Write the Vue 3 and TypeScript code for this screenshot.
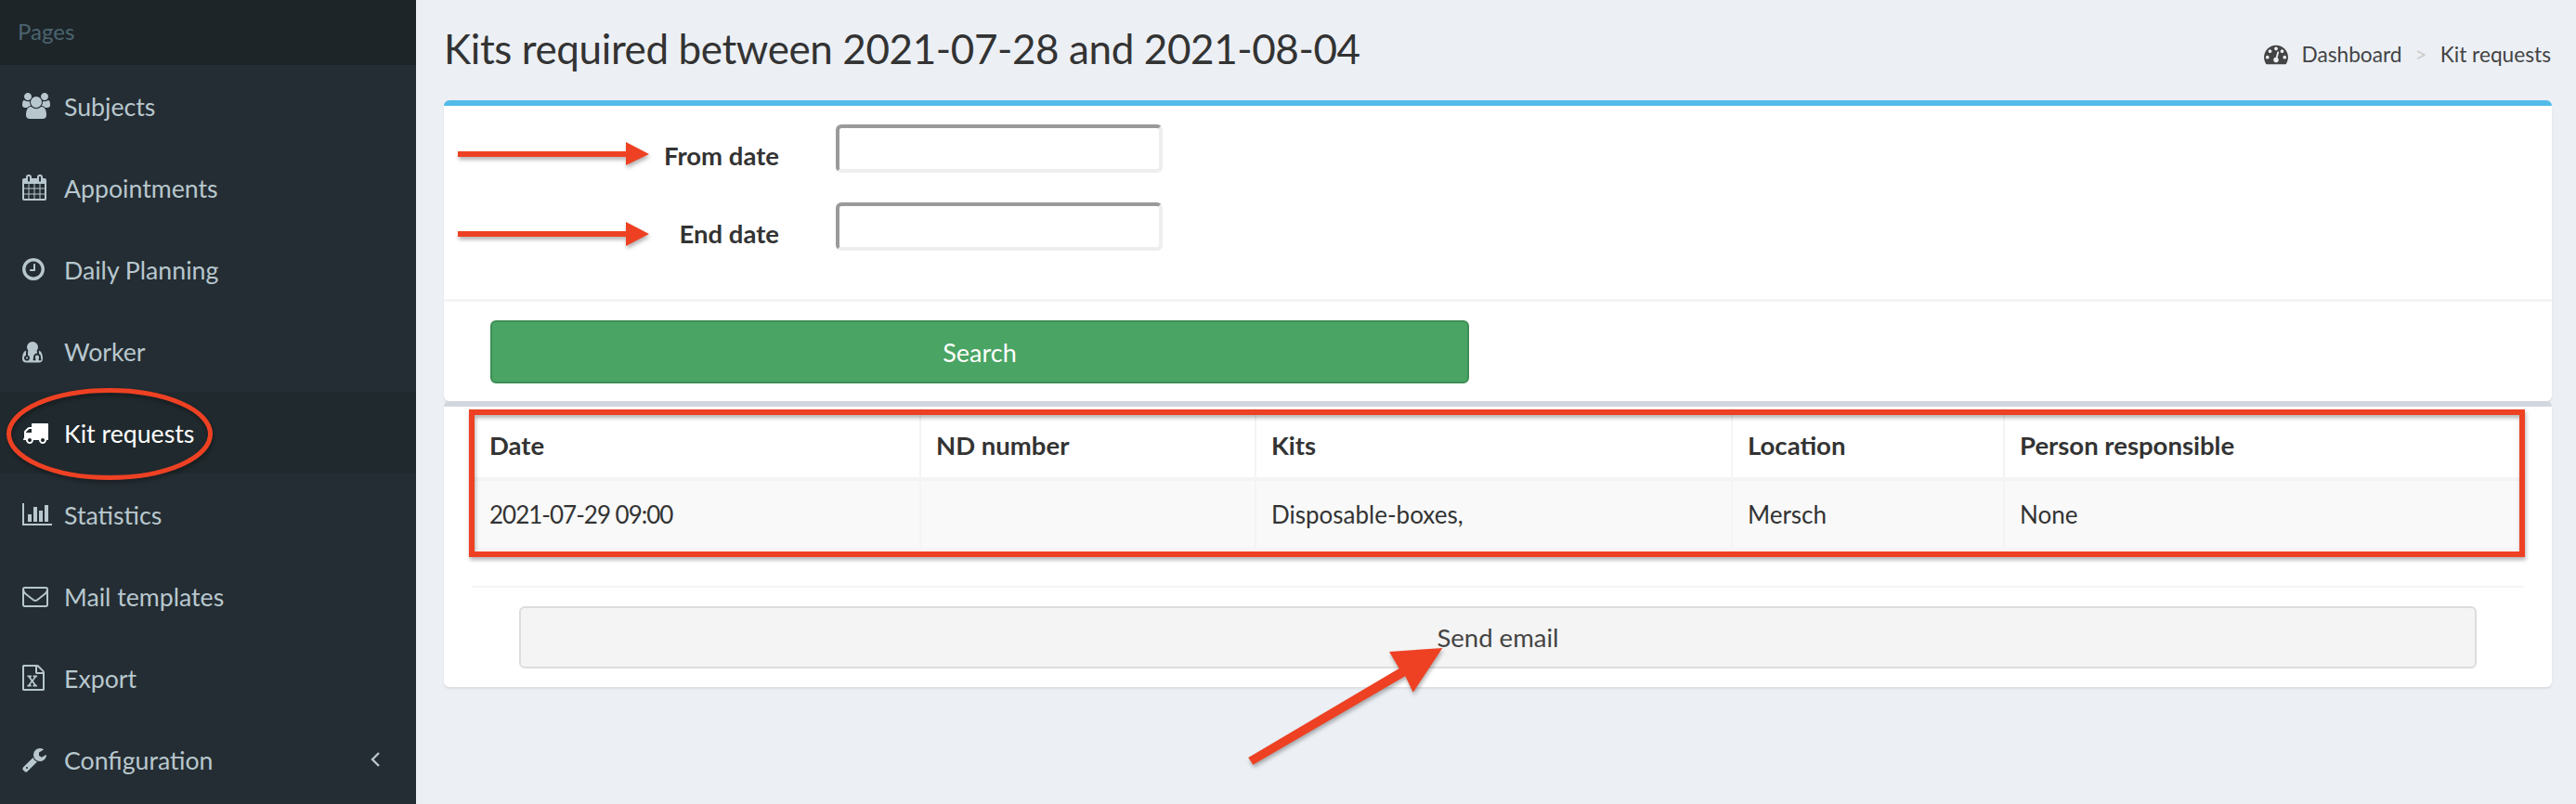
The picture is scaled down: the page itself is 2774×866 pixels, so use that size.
<script setup lang="ts">
interface NavItem {
  label: string
  w: number
  d: string
  active?: boolean
  caret?: boolean
}

const navItems: NavItem[] = [
  { label: 'Subjects', w: 2048, d: 'M593 896q-162 5-265 128h-134q-82 0-138-40.5t-56-118.5q0-353 124-353 6 0 43.5 21t97.5 42.5 119 21.5q67 0 133-23-5 37-5 66 0 139 81 256zm1071 637q0 120-73 189.5t-194 69.5h-874q-121 0-194-69.5t-73-189.5q0-53 3.5-103.5t14-109 26.5-108.5 43-97.5 62-81 85.5-53.5 111.5-20q10 0 43 21.5t73 48 107 48 135 21.5 135-21.5 107-48 73-48 43-21.5q61 0 111.5 20t85.5 53.5 62 81 43 97.5 26.5 108.5 14 109 3.5 103.5zm-1024-1277q0 106-75 181t-181 75-181-75-75-181 75-181 181-75 181 75 75 181zm704 384q0 159-112.5 271.5t-271.5 112.5-271.5-112.5-112.5-271.5 112.5-271.5 271.5-112.5 271.5 112.5 112.5 271.5zm576 225q0 78-56 118.5t-138 40.5h-134q-103-123-265-128 81-117 81-256 0-29-5-66 66 23 133 23 59 0 119-21.5t97.5-42.5 43.5-21q124 0 124 353zm-128-609q0 106-75 181t-181 75-181-75-75-181 75-181 181-75 181 75 75 181z' },
  { label: 'Appointments', w: 1664, d: 'M128 1664h288v-288h-288v288zm352 0h320v-288h-320v288zm-352-352h288v-320h-288v320zm352 0h320v-320h-320v320zm-352-384h288v-288h-288v288zm736 736h320v-288h-320v288zm-384-736h320v-288h-320v288zm768 736h288v-288h-288v288zm-384-352h320v-320h-320v320zm-352-864v-288q0-13-9.5-22.5t-22.5-9.5h-64q-13 0-22.5 9.5t-9.5 22.5v288q0 13 9.5 22.5t22.5 9.5h64q13 0 22.5-9.5t9.5-22.5zm736 864h288v-320h-288v320zm-384-384h320v-288h-320v288zm384 0h288v-288h-288v288zm32-480v-288q0-13-9.5-22.5t-22.5-9.5h-64q-13 0-22.5 9.5t-9.5 22.5v288q0 13 9.5 22.5t22.5 9.5h64q13 0 22.5-9.5t9.5-22.5zm384-64v1280q0 52-38 90t-90 38h-1408q-52 0-90-38t-38-90v-1280q0-52 38-90t90-38h128v-96q0-66 47-113t113-47h64q66 0 113 47t47 113v96h384v-96q0-66 47-113t113-47h64q66 0 113 47t47 113v96h128q52 0 90 38t38 90z' },
  { label: 'Daily Planning', w: 1536, d: 'M896 544v448q0 14-9 23t-23 9h-320q-14 0-23-9t-9-23v-64q0-14 9-23t23-9h224v-352q0-14 9-23t23-9h64q14 0 23 9t9 23zm416 352q0-148-73-273t-198-198-273-73-273 73-198 198-73 273 73 273 198 198 273 73 273-73 198-198 73-273zm224 0q0 209-103 385.5t-279.5 279.5-385.5 103-385.5-103-279.5-279.5-103-385.5 103-385.5 279.5-279.5 385.5-103 385.5 103 279.5 279.5 103 385.5z' },
  { label: 'Worker', w: 1408, d: 'M384 1376q0 26-19 45t-45 19-45-19-19-45 19-45 45-19 45 19 19 45zm1024 61q0 121-73 190t-194 69h-874q-121 0-194-69t-73-190q0-68 5.5-131t24-138 47.5-132.5 81-103 120-60.5q-22 52-22 120v203q-58 20-93 70t-35 111q0 80 56 136t136 56 136-56 56-136q0-61-35.5-111t-92.5-70v-203q0-62 25-93 132 104 295 104t295-104q25 31 25 93v64q-106 0-181 75t-75 181v89q-32 29-32 71 0 40 28 68t68 28 68-28 28-68q0-42-32-71v-89q0-52 38-90t90-38 90 38 38 90v89q-32 29-32 71 0 40 28 68t68 28 68-28 28-68q0-42-32-71v-89q0-68-34.5-127.5t-93.5-93.5q0-10 .5-42.5t0-48-2.5-41.5-7-47-13-40q68 15 120 60.5t81 103 47.5 132.5 24 138 5.5 131zm-320-797q0 159-112.5 271.5t-271.5 112.5-271.5-112.5-112.5-271.5 112.5-271.5 271.5-112.5 271.5 112.5 112.5 271.5z' },
  { label: 'Kit requests', w: 1792, active: true, d: 'M640 1408q0-52-38-90t-90-38-90 38-38 90 38 90 90 38 90-38 38-90zm-384-512h384v-256h-158q-13 0-22 9l-195 195q-9 9-9 22v30zm1280 512q0-52-38-90t-90-38-90 38-38 90 38 90 90 38 90-38 38-90zm256-1088v1024q0 15-4 26.5t-13.5 18.5-16.5 11.5-23.5 6-22.5 2-25.5 0-22.5-.5q0 106-75 181t-181 75-181-75-75-181h-384q0 106-75 181t-181 75-181-75-75-181h-64q-3 0-22.5.5t-25.5 0-22.5-2-23.5-6-16.5-11.5-13.5-18.5-4-26.5q0-26 19-45t45-19v-320q0-8-.5-35t0-38 2.5-34.5 6.5-37 14-30.5 22.5-30l198-198q19-19 50.5-32t58.5-13h160v-192q0-26 19-45t45-19h1024q26 0 45 19t19 45z' },
  { label: 'Statistics', w: 2048, d: 'M640 896v512h-256v-512h256zm384-512v1024h-256v-1024h256zm1024 1152v128h-2048v-1536h128v1408h1920zm-640-896v768h-256v-768h256zm384-384v1152h-256v-1152h256z' },
  { label: 'Mail templates', w: 1792, d: 'M1664 1504v-768q-32 36-69 66-268 206-426 338-51 43-83 67t-86.5 48.5-102.5 24.5h-2q-48 0-102.5-24.5t-86.5-48.5-83-67q-158-132-426-338-37-30-69-66v768q0 13 9.5 22.5t22.5 9.5h1472q13 0 22.5-9.5t9.5-22.5zm0-1051v-24.5l-.5-13-3-12.5-5.5-9-9-7.5-14-2.5h-1472q-13 0-22.5 9.5t-9.5 22.5q0 168 147 284 193 152 401 317 6 5 35 29.5t46 37.5 44.5 31.5 50.5 27.5 43 9h2q20 0 43-9t50.5-27.5 44.5-31.5 46-37.5 35-29.5q208-165 401-317 54-43 100.5-115.5t46.5-131.5zm128-37v1088q0 66-47 113t-113 47h-1472q-66 0-113-47t-47-113v-1088q0-66 47-113t113-47h1472q66 0 113 47t47 113z' },
  { label: 'Export', w: 1536, d: 'M1468 380q28 28 48 76t20 88v1152q0 40-28 68t-68 28h-1344q-40 0-68-28t-28-68v-1600q0-40 28-68t68-28h896q40 0 88 20t76 48zm-444-244v376h376q-10-29-22-41l-313-313q-12-12-41-22zm384 1528v-1024h-416q-40 0-68-28t-28-68v-416h-768v1536h1280zm-1064-268v106h281v-106h-75l103-161q5-7 10-16.5t7.5-13.5 3.5-4h2q1 4 5 10 2 4 4.5 7.5t6 8 6.5 8.5l107 161h-76v106h291v-106h-68l-192-273 195-282h67v-107h-279v107h74l-103 159q-4 7-10 16.5t-9 13.5l-2 3h-2q-1-4-5-10-6-11-17-23l-106-159h76v-107h-290v107h68l189 272-194 283h-68z' },
  { label: 'Configuration', w: 1664, caret: true, d: 'M384 1472q0-26-19-45t-45-19-45 19-19 45 19 45 45 19 45-19 19-45zm644-420l-682 682q-37 37-90 37-52 0-91-37l-106-108q-38-36-38-90 0-53 38-91l681-681q39 98 114.5 173.5t173.5 114.5zm634-435q0 39-23 106-47 134-164.5 217.5t-258.5 83.5q-185 0-316.5-131.5t-131.5-316.5 131.5-316.5 316.5-131.5q58 0 121.5 16.5t107.5 46.5q16 11 16 28t-16 28l-293 169v224l193 107q5-3 79-48.5t135.5-81 70.5-35.5q15 0 23.5 10t8.5 25z' }
]

const dashboardPath = 'M384 1152q0-53-37.5-90.5t-90.5-37.5-90.5 37.5-37.5 90.5 37.5 90.5 90.5 37.5 90.5-37.5 37.5-90.5zm192-448q0-53-37.5-90.5t-90.5-37.5-90.5 37.5-37.5 90.5 37.5 90.5 90.5 37.5 90.5-37.5 37.5-90.5zm428 481l101-382q6-26-7.5-48.5t-38.5-29.5-48 6.5-30 39.5l-101 382q-60 5-107 43.5t-63 98.5q-20 77 20 146t117 89 146-20 89-117q16-60-6-117t-72-91zm660-33q0-53-37.5-90.5t-90.5-37.5-90.5 37.5-37.5 90.5 37.5 90.5 90.5 37.5 90.5-37.5 37.5-90.5zm-640-640q0-53-37.5-90.5t-90.5-37.5-90.5 37.5-37.5 90.5 37.5 90.5 90.5 37.5 90.5-37.5 37.5-90.5zm448 192q0-53-37.5-90.5t-90.5-37.5-90.5 37.5-37.5 90.5 37.5 90.5 90.5 37.5 90.5-37.5 37.5-90.5zm320 448q0 261-141 483-19 29-54 29h-1402q-35 0-54-29-141-221-141-483 0-182 71-348t191-286 286-191 348-71 348 71 286 191 191 286 71 348z'

const columns: string[] = ['Date', 'ND number', 'Kits', 'Location', 'Person responsible']
const row: string[] = ['2021-07-29 09:00', '', 'Disposable-boxes,', 'Mersch', 'None']
</script>

<template>
  <div class="page">
    <aside class="sidebar">
      <div class="side-head">Pages</div>
      <nav>
        <a v-for="item in navItems" :key="item.label" class="nav-item" :class="{ active: item.active }">
          <span class="nav-icon">
            <svg :viewBox="`0 0 ${item.w} 1792`" :width="(item.w / 1792) * 28" height="28" fill="currentColor">
              <path :d="item.d" />
            </svg>
          </span>
          <span class="nav-label">{{ item.label }}</span>
          <svg v-if="item.caret" class="caret" viewBox="0 0 12 18" width="12" height="18" fill="none" stroke="currentColor" stroke-width="2.4">
            <path d="M10 2 3 9l7 7" />
          </svg>
        </a>
      </nav>
    </aside>

    <main class="content">
      <header class="head">
        <h1>Kits required between 2021-07-28 and 2021-08-04</h1>
        <div class="crumbs">
          <svg viewBox="0 0 1792 1792" width="26" height="26" fill="currentColor"><path :d="dashboardPath" /></svg>
          <span class="crumb-first">Dashboard</span>
          <span class="sep">&gt;</span>
          <span>Kit requests</span>
        </div>
      </header>

      <section class="box box-top">
        <div class="form">
          <div class="field">
            <label>From date</label>
            <input type="text" />
          </div>
          <div class="field">
            <label>End date</label>
            <input type="text" />
          </div>
        </div>
        <div class="foot">
          <button class="search">Search</button>
        </div>
      </section>

      <section class="box box-results">
        <table>
          <thead>
            <tr><th v-for="c in columns" :key="c">{{ c }}</th></tr>
          </thead>
          <tbody>
            <tr><td v-for="(v, i) in row" :key="i">{{ v }}</td></tr>
          </tbody>
        </table>
        <div class="send-row">
          <button class="send">Send email</button>
        </div>
      </section>
    </main>

    <svg class="marks" viewBox="0 0 2774 866" width="2774" height="866">
      <g class="shadowed">
        <ellipse cx="118" cy="467.5" rx="108.5" ry="47" fill="none" stroke="#ee4123" stroke-width="5" />
        <polygon points="493,163 674,163 674,153 699,166 674,178 674,169 493,169" fill="#ee4123" />
        <polygon points="493,249 674,249 674,239 699,252 674,265 674,255 493,255" fill="#ee4123" />
        <rect x="508" y="444" width="2208" height="153" fill="none" stroke="#ee4123" stroke-width="6" />
        <polygon points="1344.3,816 1506.7,720 1496,702 1553.3,698 1521.7,745.7 1513.3,728.3 1349.3,823.7" fill="#ee4123" />
      </g>
    </svg>
  </div>
</template>

<style scoped>
.page {
  position: relative;
  display: flex;
  height: 866px;
  overflow: hidden;
  background: #ecf0f5;
  font-family: Lato, "Noto Sans", sans-serif;
  color: #333;
}
.sidebar {
  width: 448px;
  flex: none;
  background: #242d33;
}
.side-head {
  height: 70px;
  line-height: 68px;
  padding-left: 19px;
  background: #1d2529;
  color: #4b646f;
  font-size: 24px;
}
.nav-item {
  display: flex;
  align-items: center;
  height: 88px;
  padding-left: 24px;
  color: #b8c7ce;
  font-size: 26.7px;
}
.nav-item.active {
  background: #20292d;
  color: #fff;
}
.nav-icon {
  width: 45px;
  flex: none;
  display: flex;
  align-items: center;
}
.nav-label {
  padding-top: 2px;
}
.caret {
  margin-left: auto;
  margin-right: 38px;
}
.content {
  flex: 1;
  min-width: 0;
  padding-left: 30px;
  padding-right: 26px;
}
.head {
  display: flex;
  justify-content: space-between;
  height: 108px;
}
h1 {
  margin: 0;
  padding-top: 24px;
  font-size: 44px;
  line-height: 56px;
  font-weight: 400;
  letter-spacing: -0.4px;
}
.crumbs {
  display: flex;
  align-items: center;
  height: 30px;
  margin-top: 43px;
  color: #444;
  font-size: 22.7px;
  margin-right: 1px;
}
.crumb-first {
  margin-left: 14px;
}
.sep {
  margin: 0 14px;
  color: #ccc;
}
.box {
  background: #fff;
  border-radius: 6px;
  box-shadow: 0 2px 2px rgba(0, 0, 0, 0.08);
}
.box-top {
  height: 324px;
  box-sizing: border-box;
  border-top: 6px solid #52bbe8;
}
.form {
  height: 208px;
  padding-top: 20px;
  box-sizing: border-box;
}
.field {
  display: flex;
  align-items: flex-start;
  height: 52px;
  margin-bottom: 32px;
}
.field label {
  width: 361px;
  padding-top: 16px;
  text-align: right;
  font-size: 27.5px;
  line-height: 36px;
  font-weight: 700;
  color: #333;
}
.field input {
  width: 352px;
  height: 52px;
  margin: 0 0 0 61px;
  padding: 0;
  box-sizing: border-box;
  border-width: 4px;
  border-style: solid;
  border-color: #9a9a9a #eee #eee #9a9a9a;
  border-radius: 6px;
  background: #fff;
}
.foot {
  height: 110px;
  border-top: 3px solid #f4f4f4;
  padding: 20px 0 0 50px;
  box-sizing: border-box;
}
.search {
  display: block;
  width: 1054px;
  height: 68px;
  border: 2px solid #3e8e55;
  border-radius: 6px;
  background: #4aa463;
  color: #fff;
  font-family: inherit;
  font-size: 27px;
}
.box-results {
  height: 308px;
  box-sizing: border-box;
  border-top: 6px solid #d2d6de;
  padding: 2px 30px 0;
}
table {
  width: 2210px;
  table-layout: fixed;
  border-collapse: collapse;
  font-size: 26px;
}
th, td {
  padding: 0 16px;
  text-align: left;
  border-right: 2px solid #f4f4f4;
  box-sizing: border-box;
}
th:last-child, td:last-child {
  border-right: 0;
}
th {
  height: 76px;
  padding-top: 4px;
  font-size: 27.5px;
  font-weight: 700;
  border-bottom: 4px solid #f4f4f4;
}
td {
  height: 75px;
  background: #f9f9f9;
  border-bottom: 2px solid #f4f4f4;
}
td:first-child {
  letter-spacing: -1px;
}
th:first-child, td:first-child {
  padding-left: 19px;
}
th:nth-child(1) { width: 483px; }
th:nth-child(2) { width: 361px; }
th:nth-child(3) { width: 513px; }
th:nth-child(4) { width: 293px; }
.send-row {
  margin-top: 39px;
  padding: 20px 51px 0;
  border-top: 2px solid #f4f4f4;
}
.send {
  display: block;
  width: 100%;
  height: 67px;
  border: 2px solid #ddd;
  border-radius: 6px;
  background: #f4f4f4;
  color: #444;
  font-family: inherit;
  font-size: 27.5px;
}
.marks {
  position: absolute;
  left: 0;
  top: 0;
  pointer-events: none;
}
.shadowed {
  filter: drop-shadow(1px 3px 2px rgba(0, 0, 0, 0.3));
}
</style>

<style>
html, body {
  margin: 0;
  background: #ecf0f5;
}
</style>
